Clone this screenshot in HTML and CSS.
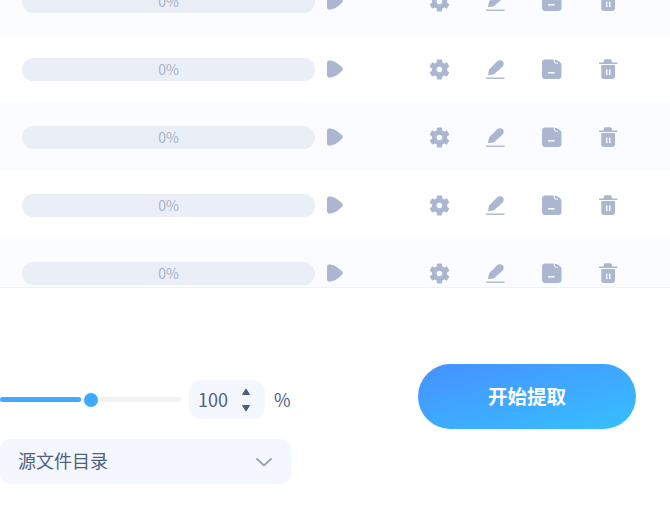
FILE: index.html
```html
<!DOCTYPE html>
<html lang="zh-CN">
  <head>
    <meta charset="UTF-8" />
    <title>提取</title>
    <link rel="stylesheet" href="styles.css">
  </head>
  <body>
    <svg class="defs" width="0" height="0">
      <symbol id="i-play" viewBox="0 0 16 18">
        <path d="M0 3C0 1 1.500.2 3.500.4 8 1 12 4 15 7.200c1 1 1 2.600 0 3.600-3 3.200-7 6.200-11.500 6.800C1.500 17.800 0 17 0 15z" />
      </symbol>
      <symbol id="i-gear" viewBox="0 0 24 24">
        <path fill-rule="evenodd" d="M19.14 12.94c.04-.3.06-.61.06-.94 0-.32-.02-.64-.07-.94l2.03-1.58a.49.49 0 0 0 .12-.61l-1.92-3.32a.488.488 0 0 0-.59-.22l-2.39.96c-.5-.38-1.03-.7-1.62-.94l-.36-2.54a.484.484 0 0 0-.48-.41h-3.84c-.24 0-.43.17-.47.41l-.36 2.54c-.59.24-1.13.57-1.62.94l-2.39-.96c-.22-.08-.47 0-.59.22L2.74 8.87c-.12.21-.08.47.12.61l2.03 1.58c-.05.3-.09.63-.09.94s.02.64.07.94l-2.03 1.58a.49.49 0 0 0-.12.61l1.92 3.32c.12.22.37.29.59.22l2.39-.96c.5.38 1.03.7 1.62.94l.36 2.54c.05.24.24.41.48.41h3.84c.24 0 .44-.17.47-.41l.36-2.54c.59-.24 1.13-.56 1.62-.94l2.39.96c.22.08.47 0 .59-.22l1.92-3.32c.12-.22.07-.47-.12-.61l-2.01-1.58zM12 14.700a2.700 2.700 0 1 1 0-5.400 2.700 2.700 0 0 1 0 5.400z" />
      </symbol>
      <symbol id="i-pen" viewBox="0 0 20 20">
        <path d="M2 16.200L3 10.500 10.500 3C12 1 14.700.6 16.500 2c1.800 1.700 1.500 4 0 5.700L8 15.200z" />
        <rect x="0" y="18.500" width="18.500" height="1.400" />
      </symbol>
      <symbol id="i-folder" viewBox="0 0 20 20">
        <path fill-rule="evenodd" d="M3 .5h8.700V2c0 1.500 1.100 2.600 2.800 2.600h1.500v-.9h-1.500c-1.100 0-1.900-.7-1.900-1.700V.7c3.400.3 6.900 2.300 6.900 5.300v11c0 1.700-1.300 3-3 3H3c-1.700 0-3-1.300-3-3V3.500C0 1.800 1.300.5 3 .5zM6 13v1.400h6.500V13z" />
      </symbol>
      <symbol id="i-trash" viewBox="0 0 20 20">
        <path d="M5.500 3.500l.5-2C6.200.7 6.800.3 7.500.3h4.500c.8 0 1.400.4 1.600 1.200l.5 2h5.200V5H1V3.500z" />
        <path fill-rule="evenodd" d="M3.300 6h13.700v11.500c0 1.400-1.100 2.500-2.500 2.500H5.800c-1.400 0-2.500-1.100-2.500-2.500zM7.900 10.500V16h1.500v-5.500zM11 10.500V16h1.500v-5.500z" />
      </symbol>
    </svg>

    <!-- 文件列表 -->
    <section class="list">
      <div class="list-inner">
        <div class="row row-alt">
          <div class="progress">0%</div>
          <svg class="ico ico-play"><use href="#i-play" /></svg>
          <div class="actions">
            <svg class="ico ico-gear"><use href="#i-gear" /></svg>
            <svg class="ico"><use href="#i-pen" /></svg>
            <svg class="ico"><use href="#i-folder" /></svg>
            <svg class="ico"><use href="#i-trash" /></svg>
          </div>
        </div>
        <div class="row">
          <div class="progress">0%</div>
          <svg class="ico ico-play"><use href="#i-play" /></svg>
          <div class="actions">
            <svg class="ico ico-gear"><use href="#i-gear" /></svg>
            <svg class="ico"><use href="#i-pen" /></svg>
            <svg class="ico"><use href="#i-folder" /></svg>
            <svg class="ico"><use href="#i-trash" /></svg>
          </div>
        </div>
        <div class="row row-alt">
          <div class="progress">0%</div>
          <svg class="ico ico-play"><use href="#i-play" /></svg>
          <div class="actions">
            <svg class="ico ico-gear"><use href="#i-gear" /></svg>
            <svg class="ico"><use href="#i-pen" /></svg>
            <svg class="ico"><use href="#i-folder" /></svg>
            <svg class="ico"><use href="#i-trash" /></svg>
          </div>
        </div>
        <div class="row">
          <div class="progress">0%</div>
          <svg class="ico ico-play"><use href="#i-play" /></svg>
          <div class="actions">
            <svg class="ico ico-gear"><use href="#i-gear" /></svg>
            <svg class="ico"><use href="#i-pen" /></svg>
            <svg class="ico"><use href="#i-folder" /></svg>
            <svg class="ico"><use href="#i-trash" /></svg>
          </div>
        </div>
        <div class="row row-alt">
          <div class="progress">0%</div>
          <svg class="ico ico-play"><use href="#i-play" /></svg>
          <div class="actions">
            <svg class="ico ico-gear"><use href="#i-gear" /></svg>
            <svg class="ico"><use href="#i-pen" /></svg>
            <svg class="ico"><use href="#i-folder" /></svg>
            <svg class="ico"><use href="#i-trash" /></svg>
          </div>
        </div>
      </div>
    </section>

    <!-- 底部操作区 -->
    <section class="footer">
      <div class="options">
        <div class="quality">
          <div class="slider">
            <div class="slider-fill"></div>
            <div class="slider-thumb"></div>
          </div>
          <div class="number">
            <span class="number-value">100</span>
            <div class="spinner">
              <svg width="10" height="8" viewBox="0 0 10 8"><path d="M5 1L8.500 6.500h-7z" /></svg>
              <svg width="10" height="8" viewBox="0 0 10 8"><path d="M5 7L1.500 1.500h7z" /></svg>
            </div>
          </div>
          <span class="unit">%</span>
        </div>
        <div class="select">
          <span class="select-label">源文件目录</span>
          <svg width="18" height="10" viewBox="0 0 18 10"><path d="M1.500 1.500L9 8.500l7.500-7" /></svg>
        </div>
      </div>
      <button class="start">开始提取</button>
    </section>
  </body>
</html>
```

FILE: styles.css
```css
* {
  margin: 0;
  padding: 0;
  box-sizing: border-box;
}
html,
body {
  font-family: "Noto Sans CJK SC", "Noto Sans", sans-serif;
  background-color: #fff;
  overflow: hidden;
}
.defs {
  position: absolute;
}
.list {
  height: 288px;
  overflow: hidden;
  border-bottom: 1px solid #eef1f7;
}
.list-inner {
  margin-top: -33px;
}
.row {
  display: flex;
  align-items: center;
  height: 68px;
  padding-left: 22px;
}
.row-alt {
  background-color: #fbfcff;
}
.progress {
  width: 293px;
  height: 23px;
  border-radius: 12px;
  background-color: #e9eef7;
  color: #a9b3c7;
  font-size: 14px;
  line-height: 23px;
  text-align: center;
}
.ico {
  display: block;
  width: 20px;
  height: 20px;
  fill: #abb7d1;
}
.ico-play {
  width: 16px;
  height: 18px;
  margin-left: 12px;
}
.ico-gear {
  width: 25px;
  height: 25px;
  margin: 0 -1.500px 0 -3px;
}
.actions {
  display: flex;
  align-items: center;
  gap: 36px;
  margin-left: 86.500px;
}
.footer {
  display: flex;
  align-items: flex-start;
}
.options {
  width: 291px;
  margin-top: 92px;
}
.quality {
  display: flex;
  align-items: center;
  height: 39px;
}
.slider {
  position: relative;
  width: 181px;
  height: 5px;
  border-radius: 3px;
  background-color: #f0f2f6;
}
.slider-fill {
  width: 81px;
  height: 5px;
  border-radius: 3px;
  background-color: #3eaaff;
}
.slider-thumb {
  position: absolute;
  top: -4.500px;
  left: 83.500px;
  width: 14px;
  height: 14px;
  border-radius: 50%;
  background-color: #3eaaff;
  box-shadow: 0 0 0 2px #fff;
}
.number {
  display: flex;
  align-items: center;
  justify-content: space-between;
  width: 76px;
  height: 39px;
  margin-left: 8px;
  padding: 0 14px 0 9px;
  border-radius: 12px;
  background-color: #f4f7fe;
  color: #4f5f80;
  font-size: 18px;
}
.number-value {
  padding-bottom: 2px;
}
.spinner {
  display: flex;
  flex-direction: column;
  gap: 8px;
}
.spinner svg {
  display: block;
  fill: #4f5f80;
  stroke: #4f5f80;
  stroke-linejoin: round;
}
.unit {
  margin-left: 9px;
  padding-bottom: 2px;
  color: #4f5f80;
  font-size: 18px;
}
.select {
  display: flex;
  align-items: center;
  justify-content: space-between;
  height: 45px;
  margin-top: 20px;
  padding: 0 18px;
  border-radius: 10px;
  background-color: #f4f7fe;
  color: #4f5f80;
  font-size: 18px;
}
.select-label {
  padding-bottom: 4px;
}
.select svg {
  fill: none;
  stroke: #9aa4b8;
  stroke-width: 2;
}
.start {
  width: 218px;
  height: 65px;
  margin: 76px 0 0 127px;
  padding-bottom: 2px;
  border: none;
  border-radius: 33px;
  background: linear-gradient(165deg, #4790ff 0%, #36c0ff 100%);
  color: #fff;
  font-family: inherit;
  font-size: 19.500px;
  font-weight: 700;
}
```
